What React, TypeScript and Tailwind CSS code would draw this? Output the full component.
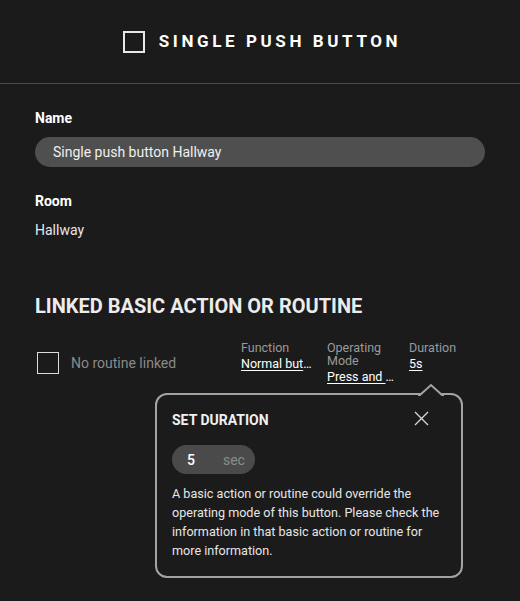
import React from 'react';

const columns = [
  { label: 'Function', value: 'Normal button', width: 'w-[68px]' },
  { label: 'Operating Mode', value: 'Press and hold', width: 'w-[64px]' },
  { label: 'Duration', value: '5s', width: 'w-[68px]' },
];

export default function App() {
  return (
    <div className="relative min-h-[601px] w-[520px] bg-[#1b1b1b] text-[#f2f2f2] font-['Roboto',sans-serif]">
      {/* Header */}
      <div className="flex h-[84px] items-center justify-center gap-[14px] border-b border-[#4a4a4a]">
        <div className="h-[22px] w-[22px] border-2 border-[#e8e8e8]" />
        <h1 className="-mr-[4px] text-[17px] font-bold tracking-[3.6px] text-white">SINGLE PUSH BUTTON</h1>
      </div>

      <div className="px-[35px] pt-[24px]">
        <div className="text-sm font-bold leading-5 text-white">Name</div>
        <div className="mt-[9px] flex h-[30px] items-center rounded-full bg-[#4f4f4f] px-[18px] text-sm text-[#f0f0f0]">
          Single push button Hallway
        </div>

        <div className="mt-[24px] text-sm font-bold leading-5 text-white">Room</div>
        <div className="mt-[9px] text-sm leading-5 text-[#e8e8e8]">Hallway</div>

        <h2 className="mt-[53px] text-[20px] font-bold leading-[26px] text-[#ececec]">LINKED BASIC ACTION OR ROUTINE</h2>

        {/* Linked row */}
        <div className="mt-[22px] flex items-start">
          <div className="flex items-center pt-[11px]">
            <div className="ml-[2px] h-[22px] w-[22px] border-[1.5px] border-[#dcdcdc]" />
            <span className="ml-[12px] text-sm text-[#8a8a8a]">No routine linked</span>
          </div>
          <div className="ml-auto mr-[8px] flex gap-[18px]">
            {columns.map((c) => (
              <div key={c.label} className={c.width}>
                <div className="text-[12.5px] leading-[13px] text-[#9a9a9a]">{c.label}</div>
                <div className="-mr-[3px] mt-[2px] truncate text-[12.5px] leading-[15px] text-white underline underline-offset-2">{c.value}</div>
              </div>
            ))}
          </div>
        </div>
      </div>

      {/* Duration popover */}
      <div className="absolute left-[155px] top-[393px] w-[308px] rounded-[12px] border-2 border-[#a3a3a3] bg-[#1b1b1b] px-[15px] pb-[16px] pt-[15px]">
        <svg className="absolute -top-[12px] left-[261px]" width="26" height="14" viewBox="0 0 26 14">
          <path d="M0 12 L2 12 L13 2 L24 12 L26 12 L26 14 L0 14 Z" fill="#1b1b1b" />
          <path d="M0 12 L2 12 L13 2 L24 12 L26 12" fill="none" stroke="#a3a3a3" strokeWidth="2" />
        </svg>
        <div className="flex items-start justify-between">
          <div className="text-sm font-bold leading-5 text-[#f0f0f0]">SET DURATION</div>
          <svg className="mr-[17px] mt-[1px]" width="15" height="15" viewBox="0 0 15 15">
            <path d="M1 1 L14 14 M14 1 L1 14" stroke="#d8d8d8" strokeWidth="1.3" />
          </svg>
        </div>
        <div className="mt-[15px] flex h-[29px] w-[83px] items-center rounded-full bg-[#4a4a4a] pl-[15px] text-sm">
          <span className="font-medium text-white">5</span>
          <span className="ml-[28px] text-[#8c8c8c]">sec</span>
        </div>
        <p className="mt-[10px] text-[12.6px] leading-[19px] text-[#e6e6e6]">
          A basic action or routine could override the operating mode of this button. Please check the information in that basic action or routine for more information.
        </p>
      </div>
    </div>
  );
}
